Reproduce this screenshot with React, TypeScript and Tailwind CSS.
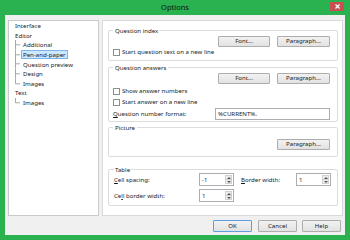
import * as React from 'react'

type TreeItem = { label: string, child?: boolean, last?: boolean, selected?: boolean }

const treeItems: TreeItem[] = [
  { label: 'Interface' },
  { label: 'Editor' },
  { label: 'Additional', child: true },
  { label: 'Pen-and-paper', child: true, selected: true },
  { label: 'Question preview', child: true },
  { label: 'Design', child: true },
  { label: 'Images', child: true, last: true },
  { label: 'Text' },
  { label: 'Images', child: true, last: true },
]

const Button: React.FC<{ label: string, className?: string }> = ({ label, className }) => (
  <div className={`flex items-center justify-center rounded-[1px] border bg-linear-to-b from-[#f2f2f2] to-[#e2e2e2] text-[6.1px] leading-none text-[#1a1a1a] ${className ?? ''}`}>
    {label}
  </div>
)

const Check: React.FC<{ label: string, className?: string }> = ({ label, className }) => (
  <div className={`flex h-[8px] items-center gap-[2px] ${className ?? ''}`}>
    <span className="h-[7px] w-[7px] border border-[#8e8f8f] bg-white" />
    <span>{label}</span>
  </div>
)

const Spin: React.FC<{ value: string }> = ({ value }) => (
  <div className="flex h-[13px] w-[35px] border border-[#abadb3] bg-white">
    <span className="flex-1 pl-[2px] leading-[11px]">{value}</span>
    <div className="my-[1px] mr-[1px] flex w-[7px] flex-col border border-[#d0d0d0] bg-[#eeeeee]">
      <div className="flex flex-1 items-center justify-center">
        <svg width="4" height="2" viewBox="0 0 4 2"><path d="M0 2 L2 0 L4 2 Z" fill="#555" /></svg>
      </div>
      <div className="flex flex-1 items-center justify-center border-t border-[#d0d0d0]">
        <svg width="4" height="2" viewBox="0 0 4 2"><path d="M0 0 L2 2 L4 0 Z" fill="#555" /></svg>
      </div>
    </div>
  </div>
)

const Connector: React.FC<{ last?: boolean }> = ({ last }) => (
  <svg width="12" height="9.6" viewBox="0 0 12 9.6" className="shrink-0">
    <line x1="6.5" y1="0" x2="6.5" y2={last ? 4.8 : 9.6} stroke="#a8a8a8" strokeWidth="1" />
    <line x1="6.5" y1="4.8" x2="11" y2="4.8" stroke="#a8a8a8" strokeWidth="1" />
  </svg>
)

const Tree: React.FC<{}> = ({ }) => {
  return (
    <div className="h-full w-[91px] shrink-0 border border-[#c9c9c9] bg-white">
      {treeItems.map((it, i) => (
        <div key={i} className="flex h-[9.6px] items-center">
          {it.child ? <Connector last={it.last} /> : <span className="w-[4px]" />}
          <span className={it.selected
            ? 'flex h-[9px] items-center border border-[#7eb4ea] bg-[#cce8ff] px-[1px]'
            : 'px-[2px]'}>
            {it.label}
          </span>
        </div>
      ))}
    </div>
  )
}

export default function App() {
  return (
    <div className="flex h-[240px] w-[350px] flex-col bg-[#29b24f] px-[5px] pb-[5px] font-['Noto_Sans',sans-serif] text-[6.1px] text-[#1a1a1a]">
      <div className="relative flex h-[15px] items-center justify-center text-[7.5px] text-[#111]">
        Options
        <div className="absolute right-[1px] top-[2px] flex h-[9px] w-[14px] items-center justify-center bg-[#c75050]">
          <svg width="5" height="5" viewBox="0 0 5 5">
            <path d="M0.5 0.5 L4.5 4.5 M4.5 0.5 L0.5 4.5" stroke="#fff" strokeWidth="1.2" />
          </svg>
        </div>
      </div>

      <div className="flex flex-1 flex-col bg-[#f0f0f0] pl-[3px] pr-[4px] pt-[5px]">
        <div className="flex h-[196px] gap-[3px]">
          <Tree />

          <div className="flex flex-1 flex-col border border-[#d9d9d9] bg-white pl-[5px] pr-[4px] pt-[5px]">
            <fieldset className="rounded-[2px] border border-[#dcdcdc] pb-[4px] pl-[4px] pr-[7px]">
              <legend className="px-[2px] leading-[9px]">Question index</legend>
              <div className="mt-[1px] flex justify-end gap-[7px]">
                <Button label="Font..." className="h-[11px] w-[52px] border-[#adadad]" />
                <Button label="Paragraph..." className="h-[11px] w-[53px] border-[#adadad]" />
              </div>
              <Check label="Start question text on a new line" className="mt-[1px]" />
            </fieldset>

            <fieldset className="mt-[2px] rounded-[2px] border border-[#dcdcdc] pb-[1px] pl-[4px] pr-[7px]">
              <legend className="px-[2px] leading-[9px]">Question answers</legend>
              <div className="mt-[1px] flex justify-end gap-[7px]">
                <Button label="Font..." className="h-[11px] w-[52px] border-[#adadad]" />
                <Button label="Paragraph..." className="h-[11px] w-[53px] border-[#adadad]" />
              </div>
              <Check label="Show answer numbers" className="mt-[3px]" />
              <Check label="Start answer on a new line" className="mt-[3px]" />
              <div className="mt-[2px] flex h-[12px] items-center">
                <span className="w-[102px]"><u>Q</u>uestion number format:</span>
                <div className="flex h-[12px] w-[115px] items-center border border-[#abadb3] bg-white pl-[2px]">%CURRENT%.</div>
              </div>
            </fieldset>

            <fieldset className="mt-[1px] rounded-[2px] border border-[#dcdcdc] pb-[6px] pl-[4px] pr-[7px]">
              <legend className="px-[2px] leading-[9px]">Picture</legend>
              <div className="mt-[7px] flex justify-end">
                <Button label="Paragraph..." className="h-[11px] w-[53px] border-[#adadad]" />
              </div>
            </fieldset>

            <fieldset className="mt-[8px] rounded-[2px] border border-[#dcdcdc] pb-[3px] pl-[5px] pr-[4px]">
              <legend className="px-[1px] leading-[9px]">Table</legend>
              <div className="-mt-[1px] flex items-center">
                <span className="w-[85px]"><u>C</u>ell spacing:</span>
                <Spin value="-1" />
                <span className="ml-[7px] w-[55px]"><u>B</u>order width:</span>
                <Spin value="1" />
              </div>
              <div className="mt-[3px] flex items-center">
                <span className="w-[85px]">Ce<u>l</u>l border width:</span>
                <Spin value="1" />
              </div>
            </fieldset>
          </div>
        </div>

        <div className="mt-[4px] flex justify-end gap-[5px]">
          <Button label="OK" className="mr-[1px] h-[12px] w-[39px] border-[#5f9fe0]" />
          <Button label="Cancel" className="h-[12px] w-[39px] border-[#adadad]" />
          <Button label="Help" className="h-[12px] w-[39px] border-[#adadad]" />
        </div>
      </div>
    </div>
  )
}
